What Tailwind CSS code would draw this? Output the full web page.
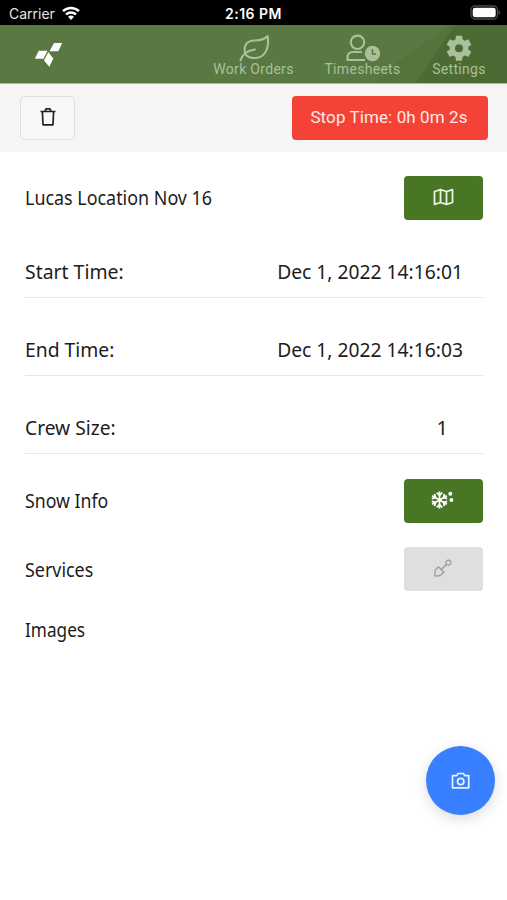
<!DOCTYPE html>
<html lang="en">
<head>
  <meta charset="UTF-8" />
  <meta name="viewport" content="width=device-width, initial-scale=1.0" />
  <title>Timesheet</title>
  <script src="https://cdn.jsdelivr.net/npm/@tailwindcss/browser@4"></script>
</head>
<body class="bg-white h-[900px] overflow-hidden font-['Noto_Sans',sans-serif] text-xl leading-6 text-[#1c1c1c]">
  <!-- Status bar -->
  <div class="h-[25px] bg-black text-white grid grid-cols-3 items-center pl-[9px] pr-[6px] font-['Inter',sans-serif]">
    <div class="flex items-center gap-[6px] text-sm leading-none text-[#e4e4e4] pt-[2px]">
      <span class="w-[47px] whitespace-nowrap">Carrier</span>
      <svg class="w-[18px] h-[14px] -mt-[2px]" viewBox="0 0 18 14" fill="none" stroke="#fff" stroke-width="2.4">
        <path d="M1 5.2a11.5 11.5 0 0 1 16 0" />
        <path d="M4 8.5a7.2 7.2 0 0 1 10 0" />
        <path d="M9 14 6 10.800a4.4 4.4 0 0 1 6 0z" fill="#fff" stroke="none" />
      </svg>
    </div>
    <div class="text-center text-sm leading-none font-semibold pt-[2px] pr-[3px] tracking-[0.5px] whitespace-nowrap">2:16 PM</div>
    <div class="flex justify-end">
      <svg class="w-[31px] h-[15px]" viewBox="0 0 31 15">
        <rect x="1" y="1" width="26.5" height="13" rx="4" fill="none" stroke="#4a4a4a" stroke-width="1.4" />
        <rect x="2.7" y="2.7" width="23" height="9.6" rx="2.4" fill="#fff" />
        <path d="M28.7 5.2c2 .8 2 3.8 0 4.6z" fill="#4a4a4a" />
      </svg>
    </div>
  </div>

  <!-- Header -->
  <header class="relative h-[59px] bg-[#5a7842] border-b border-[#a9bb9d] flex items-start justify-between pl-[35px] pr-[20px] font-[Roboto,sans-serif] text-sm leading-4 text-[#a9c09a]">
    <svg class="absolute inset-0 w-full h-full" viewBox="0 0 507 58" preserveAspectRatio="none">
      <path d="M375 58 396 38 450 0H507V58z" fill="#54743b" />
      <path d="M416 58 455 0H507V58z" fill="#4c6b34" />
    </svg>
    <svg class="relative w-[28px] h-[25px] mt-[17px]" viewBox="0 0 28 25" fill="#fff">
      <path d="M19 1H27.200L23.300 9.300H14.500z" />
      <path d="M3.700 8.700H12.500L8.500 16.800H-.2z" />
      <path d="M13.300 9.900 18.300 16.500 14.300 24.800 9 18.500z" />
    </svg>
    <nav class="relative flex gap-[30px] pt-[9px]">
      <a class="flex flex-col items-center w-[81px]">
        <svg class="w-[32px] h-[28px]" viewBox="0 0 32 28" fill="none" stroke="currentColor" stroke-width="2.1" stroke-linecap="round" stroke-linejoin="round">
          <path d="M2.500 26.500C4 21 9 16.500 17 15.500" />
          <path d="M8 21C4 12 9 6.500 17 6.500C23 6.500 27 5 29.500 2C31 9 30 23 18 24C13 24.300 10 23 8 21" />
        </svg>
        <span class="-mt-px whitespace-nowrap tracking-[0.3px]">Work Orders</span>
      </a>
      <a class="flex flex-col items-center w-[77px]">
        <svg class="w-[36px] h-[28px]" viewBox="0 0 36 28" fill="none" stroke="currentColor" stroke-width="2.2">
          <circle cx="12.500" cy="8.300" r="6.700" />
          <path d="M20 26H2.500V23a5 5 0 0 1 5-5H17" stroke-linejoin="round" />
          <circle cx="27.500" cy="19.500" r="7.700" fill="currentColor" stroke="none" />
          <path d="M27.500 15v5H31" stroke="#57763e" stroke-width="1.500" />
        </svg>
        <span class="-mt-px whitespace-nowrap tracking-[0.3px]">Timesheets</span>
      </a>
      <a class="flex flex-col items-center w-[56px]">
        <svg class="w-[32px] h-[28px]" viewBox="0 0 32 28" fill="currentColor">
          <path transform="translate(.4 -1.400) scale(1.300)" fill-rule="evenodd" d="M19.140 12.940c.04-.3.06-.61.06-.94 0-.32-.02-.64-.07-.94l2.030-1.580c.18-.14.230-.41.120-.61l-1.920-3.320c-.12-.22-.37-.29-.59-.22l-2.390.96c-.5-.38-1.030-.7-1.620-.94l-.36-2.540c-.04-.24-.24-.41-.48-.41h-3.840c-.24 0-.43.170-.47.410l-.36 2.540c-.59.240-1.130.570-1.620.940l-2.390-.96c-.22-.08-.47 0-.59.220L2.740 8.870c-.12.210-.08.470.120.610l2.030 1.580c-.05.3-.09.630-.09.940s.02.640.07.940l-2.030 1.580c-.18.140-.23.410-.12.610l1.920 3.320c.12.220.370.290.590.220l2.390-.96c.5.380 1.030.7 1.620.940l.36 2.540c.05.240.240.410.480.410h3.840c.24 0 .44-.17.470-.41l.36-2.540c.59-.24 1.130-.56 1.620-.94l2.390.96c.22.080.470 0 .59-.22l1.920-3.320c.12-.22.070-.47-.12-.61zM12 15.100A3.100 3.100 0 1 1 12 8.900a3.100 3.100 0 0 1 0 6.200z" />
        </svg>
        <span class="-mt-px whitespace-nowrap tracking-[0.3px]">Settings</span>
      </a>
    </nav>
  </header>

  <!-- Toolbar -->
  <div class="h-[68px] bg-[#f5f5f5] flex items-center justify-between pl-[20px] pr-[19px]">
    <button class="w-[55px] h-[44px] rounded-[5px] border border-[#dedede] bg-[#f8f8f8] flex items-center justify-center">
      <svg class="w-[16px] h-[20px] -mt-[2px]" viewBox="0 0 16 20" fill="none" stroke="#222" stroke-width="1.700" stroke-linejoin="round">
        <path d="M.5 4.500H15.500M2.400 4.500 3 17.800H13L13.600 4.500M5 4.200 6 1.800H10L11 4.200" />
      </svg>
    </button>
    <button class="w-[196px] h-[44px] rounded-[4px] bg-[#f44336] text-[#ffe9e6] font-[Roboto,sans-serif] text-[17px] leading-6 tracking-[0.1px] whitespace-nowrap pb-[2px] pr-[2px]">Stop Time: 0h 0m 2s</button>
  </div>

  <!-- Timesheet details -->
  <main class="pl-[25px] pr-[24px] pt-[24px]">
    <div class="h-[44px] flex items-center justify-between">
      <span class="origin-left scale-x-[0.895] whitespace-nowrap">Lucas Location Nov 16</span>
      <button class="w-[79px] h-[44px] rounded-[4px] bg-[#487624] flex items-center justify-center">
        <svg class="w-[22px] h-[18px] -mt-[2px]" viewBox="0 0 22 18" fill="none" stroke="#e9f3e2" stroke-width="1.800" stroke-linejoin="round">
          <path d="M1.500 3.500 7.500 1.700 13.500 3.500 19.500 1.700V14.500L13.500 16.300 7.500 14.500 1.500 16.300zM7.500 1.700V14.500M13.500 3.500V16.300" />
        </svg>
      </button>
    </div>
    <div class="h-[78px] border-b border-[#e6e6e6] flex items-end justify-between pb-[13px] pr-[20px]">
      <span class="origin-left scale-x-[0.97] whitespace-nowrap">Start Time:</span>
      <span class="origin-right scale-x-[0.963] whitespace-nowrap">Dec 1, 2022 14:16:01</span>
    </div>
    <div class="h-[78px] border-b border-[#e6e6e6] flex items-end justify-between pb-[13px] pr-[20px]">
      <span class="origin-left scale-x-[0.965] whitespace-nowrap">End Time:</span>
      <span class="origin-right scale-x-[0.963] whitespace-nowrap">Dec 1, 2022 14:16:03</span>
    </div>
    <div class="h-[78px] border-b border-[#e6e6e6] flex items-end justify-between pb-[13px] pr-[35px]">
      <span class="origin-left scale-x-[0.96] whitespace-nowrap">Crew Size:</span>
      <span>1</span>
    </div>
    <div class="mt-[24px] h-[45px] flex items-center justify-between">
      <span class="origin-left scale-x-[0.885] whitespace-nowrap">Snow Info</span>
      <button class="w-[79px] h-[44px] rounded-[4px] bg-[#487624] flex items-center justify-center">
        <svg class="w-[24px] h-[20px] -mt-[2px] mr-[2px]" viewBox="0 0 24 20" fill="none" stroke="#fff" stroke-width="1.700">
          <path d="M8.500 1.500V18.500M1.100 5.700 15.900 14.300M1.100 14.300 15.900 5.700" />
          <path d="M5.700 2.700 8.500 5.400 11.300 2.700M5.700 17.300 8.500 14.600 11.300 17.300M.8 8.700 4.500 7.700 3.500 4M16.200 11.300 12.500 12.300 13.500 16M.8 11.300 4.500 12.300 3.500 16M16.200 8.700 12.500 7.700 13.500 4" stroke-width="1.800" />
          <circle cx="19.300" cy="3.700" r="2" fill="#fff" stroke="none" />
          <circle cx="20.400" cy="10" r="2" fill="#fff" stroke="none" />
        </svg>
      </button>
    </div>
    <div class="mt-[24px] h-[44px] flex items-center justify-between">
      <span class="origin-left scale-x-[0.895] whitespace-nowrap pt-px">Services</span>
      <button class="w-[79px] h-[44px] rounded-[4px] bg-[#dfdfdf] flex items-center justify-center" disabled>
        <svg class="w-[18px] h-[18px] -mt-[2px] mr-px" viewBox="0 0 18 18" fill="none" stroke="#a5a5a5" stroke-width="1.500" stroke-linejoin="round">
          <path d="M4.500 7.800 9.800 13.100 7 15.900Q5 17.500 1 16.900Q.4 13 1.700 10.600zM7.200 10.600 12.500 5.400M12 2.800 14 1 16.700 2.300 16.700 4.900 14.300 6.300 12 5z" />
        </svg>
      </button>
    </div>
    <div class="mt-[27px] flex">
      <span class="origin-left scale-x-[0.86]">Images</span>
    </div>
  </main>

  <!-- Camera button -->
  <button class="absolute left-[426px] top-[746px] w-[69px] h-[69px] rounded-full bg-[#3880ff] shadow-[0_4px_14px_rgba(0,0,0,0.14)] flex items-center justify-center">
    <svg class="w-[20px] h-[18px]" viewBox="0 0 20 18" fill="none" stroke="#eaf2ff" stroke-width="1.700" stroke-linejoin="round">
      <path d="M1.500 3.700H5.500L7.200 1.500H12.300L14 3.700H17.700V15.800H1.500z" />
      <circle cx="9.700" cy="9.500" r="3.200" />
    </svg>
  </button>
</body>
</html>
